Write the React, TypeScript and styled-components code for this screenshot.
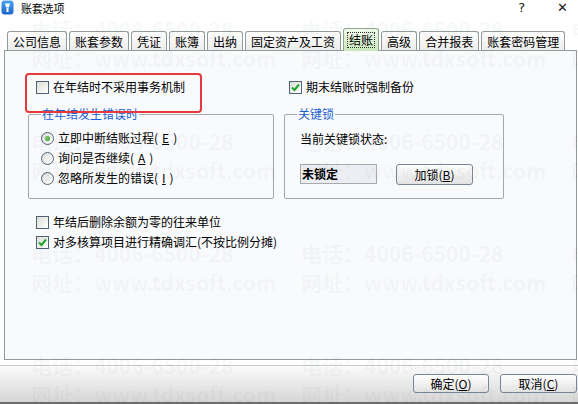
import React from 'react';
import styled, { createGlobalStyle, css } from 'styled-components';

const Global = createGlobalStyle`
  html, body { margin: 0; padding: 0; }
  body {
    width: 578px; height: 404px; overflow: hidden; background: #ffffff;
    font-family: "Noto Sans CJK SC", "Noto Sans", sans-serif;
    font-size: 12px; color: #000;
  }
`;

const Window = styled.div`
  position: relative;
  width: 578px;
  height: 404px;
  display: flex;
  flex-direction: column;
  overflow: hidden;
  background: #ffffff;
`;

const TitleBar = styled.div`
  height: 22px;
  display: flex;
  align-items: flex-start;
  padding: 0 0 0 1px;
  box-sizing: border-box;
`;

const TitleText = styled.span`
  margin-left: 7px;
  font-size: 11px;
  line-height: 16px;
  letter-spacing: -0.2px;
  color: #000;
`;

const TitleControls = styled.div`
  margin-left: auto;
  display: flex;
  gap: 32px;
  padding-right: 10px;
  font-family: "DejaVu Sans", sans-serif;
  font-size: 13px;
  line-height: 16px;
  color: #222;
`;

const TabStrip = styled.div`
  height: 28px;
  display: flex;
  align-items: flex-end;
  gap: 2px;
  padding-left: 7px;
  position: relative;
  z-index: 2;
`;

const Tab = styled.div<{ $active?: boolean }>`
  height: 19px;
  box-sizing: border-box;
  padding: 0 5px;
  border: 1px solid #919b9c;
  border-bottom: none;
  border-radius: 3px 3px 0 0;
  background: linear-gradient(#ffffff, #ececeb);
  font-size: 12px;
  line-height: 17px;
  white-space: nowrap;
  display: flex;
  align-items: center;
  ${(p) =>
    p.$active &&
    css`
      height: 23px;
      margin-bottom: -1px;
      padding: 0 4px;
      border-color: #8fa58a;
      background: linear-gradient(#f2faee, #c9e7b9);
    `}
`;

const FocusText = styled.span`
  outline: 1px dotted #333;
  padding: 0 1px;
  line-height: 14px;
`;

const Panel = styled.div`
  height: 310px;
  box-sizing: border-box;
  margin: 0 1px 0 4px;
  border: 1px solid #919b9c;
  background: #f9fafc;
  padding: 26px 0 0 23px;
  display: flex;
  flex-direction: column;
`;

const TopRow = styled.div`
  display: flex;
  gap: 10px;
`;

const Column = styled.div<{ $w: number }>`
  width: ${(p) => p.$w}px;
  display: flex;
  flex-direction: column;
`;

const CheckRow = styled.label<{ $indent?: number }>`
  position: relative;
  height: 20px;
  display: flex;
  align-items: center;
  gap: 4px;
  padding-left: ${(p) => p.$indent ?? 8}px;
  font-size: 12px;
  line-height: 16px;
  white-space: nowrap;
`;

const BoxMark = styled.span`
  width: 13px;
  height: 13px;
  box-sizing: border-box;
  border: 1px solid #4f6378;
  background: linear-gradient(135deg, #dcdcd7, #ffffff);
  display: inline-flex;
  align-items: center;
  justify-content: center;
  flex: none;
`;

const RadioMark = styled.span`
  width: 13px;
  height: 13px;
  box-sizing: border-box;
  border: 1px solid #4f6378;
  border-radius: 50%;
  background: linear-gradient(135deg, #dcdcd7, #ffffff);
  display: inline-flex;
  align-items: center;
  justify-content: center;
  flex: none;
`;

const RadioDot = styled.span`
  width: 5px;
  height: 5px;
  border-radius: 50%;
  background: radial-gradient(circle at 40% 40%, #7fd36a, #2f9a22);
`;

const Annotation = styled.span`
  position: absolute;
  left: -3px;
  top: -4px;
  width: 177px;
  height: 40px;
  box-sizing: border-box;
  border: 2px solid #e8383d;
  border-radius: 4px;
  pointer-events: none;
`;

const Group = styled.fieldset<{ $w: number; $pad: string }>`
  width: ${(p) => p.$w}px;
  box-sizing: border-box;
  margin: 10px 0 0 0;
  padding: ${(p) => p.$pad};
  border: 1px solid #a4a8ad;
  border-radius: 2px;
  min-width: 0;
`;

const Legend = styled.legend<{ $shift?: number }>`
  padding: 0 1px;
  margin-left: ${(p) => p.$shift ?? 0}px;
  font-size: 12px;
  line-height: 14px;
  color: #1a5fd1;
`;

const RadioRow = styled.label`
  height: 20px;
  display: flex;
  align-items: center;
  gap: 4px;
  font-size: 12px;
  line-height: 16px;
  white-space: nowrap;
`;

const Plain = styled.div`
  font-size: 12px;
  line-height: 16px;
  white-space: nowrap;
`;

const LockRow = styled.div`
  display: flex;
  gap: 19px;
  margin-top: 17px;
  align-items: flex-start;
`;

const StatusField = styled.div`
  width: 77px;
  height: 20px;
  box-sizing: border-box;
  border: 1px solid #a7a9ad;
  background: #eceef3;
  font-weight: 700;
  font-size: 12px;
  line-height: 18px;
  padding-left: 1px;
`;

const Button = styled.button<{ $w: number; $h?: number }>`
  width: ${(p) => p.$w}px;
  height: ${(p) => p.$h ?? 19}px;
  box-sizing: border-box;
  border: 1px solid #7a8695;
  border-radius: 3px;
  background: linear-gradient(#ffffff, #e2e2e2);
  font-family: "Noto Sans CJK SC", "Noto Sans", sans-serif;
  font-size: 12px;
  line-height: 15px;
  color: #000;
  padding: 0;
  display: flex;
  align-items: center;
  justify-content: center;
`;

const U = styled.span`
  text-decoration: underline;
`;

const BottomChecks = styled.div`
  margin-top: 13px;
  display: flex;
  flex-direction: column;
`;

const Footer = styled.div`
  margin-top: 5px;
  flex: 1;
  border-top: 1px solid #c9cbcd;
  border-bottom: 2px solid #6d6d6d;
  background: linear-gradient(#fbfbfb, #d6d6d6);
  display: flex;
  justify-content: flex-end;
  align-items: flex-start;
  gap: 11px;
  padding: 8px 1px 0 0;
`;

const Watermark = styled.div`
  position: absolute;
  inset: 0;
  pointer-events: none;
  display: grid;
  grid-template-columns: repeat(3, 270px);
  grid-auto-rows: 58px;
  row-gap: 54px;
  padding: 15px 0 0 31px;
  z-index: 5;
`;

const WaterCell = styled.div`
  font-family: "Noto Sans CJK SC", "Noto Sans", sans-serif;
  font-weight: 700;
  font-size: 21px;
  line-height: 29px;
  color: rgba(30, 40, 60, 0.042);
  white-space: nowrap;
`;

const Check = ({ on }: { on?: boolean }) => (
  <BoxMark>
    {on && (
      <svg width="11" height="11" viewBox="0 0 11 11">
        <polyline points="2,5.5 4.5,8 9,2.5" fill="none" stroke="#1fa32a" strokeWidth="2" />
      </svg>
    )}
  </BoxMark>
);

const Radio = ({ on }: { on?: boolean }) => <RadioMark>{on && <RadioDot />}</RadioMark>;

const AppIcon = () => (
  <svg width="13" height="15" viewBox="0 0 13 15">
    <defs>
      <linearGradient id="ig" x1="0" y1="0" x2="0" y2="1">
        <stop offset="0" stopColor="#4aa3f0" />
        <stop offset="1" stopColor="#1a64c8" />
      </linearGradient>
    </defs>
    <rect x="0.5" y="0.5" width="12" height="14" rx="3" fill="url(#ig)" />
    <path d="M4 3.5 h5 l-1 4 h-3 z" fill="#ffffff" />
    <rect x="5.5" y="8" width="2" height="4" fill="#ffffff" />
  </svg>
);

const tabs = ['公司信息', '账套参数', '凭证', '账簿', '出纳', '固定资产及工资', '结账', '高级', '合并报表', '账套密码管理'];

export default function App() {
  const marks = Array.from({ length: 12 });
  return (
    <Window>
      <Global />
      <TitleBar>
        <AppIcon />
        <TitleText>账套选项</TitleText>
        <TitleControls>
          <span>?</span>
          <span>✕</span>
        </TitleControls>
      </TitleBar>
      <TabStrip>
        {tabs.map((t) =>
          t === '结账' ? (
            <Tab key={t} $active>
              <FocusText>{t}</FocusText>
            </Tab>
          ) : (
            <Tab key={t}>{t}</Tab>
          )
        )}
      </TabStrip>
      <Panel>
        <TopRow>
          <Column $w={246}>
            <CheckRow>
              <Check />
              在年结时不采用事务机制
              <Annotation />
            </CheckRow>
            <Group $w={246} $pad="7px 0 10px 12px">
              <Legend>在年结发生错误时</Legend>
              <RadioRow>
                <Radio on />
                立即中断结账过程(<U>E</U>)
              </RadioRow>
              <RadioRow>
                <Radio />
                询问是否继续(<U>A</U>)
              </RadioRow>
              <RadioRow>
                <Radio />
                忽略所发生的错误(<U>I</U>)
              </RadioRow>
            </Group>
          </Column>
          <Column $w={220}>
            <CheckRow $indent={5}>
              <Check on />
              期末结账时强制备份
            </CheckRow>
            <Group $w={220} $pad="10px 0 13px 15px">
              <Legend $shift={-3}>关键锁</Legend>
              <Plain>当前关键锁状态:</Plain>
              <LockRow>
                <StatusField>未锁定</StatusField>
                <Button $w={77} $h={21}>
                  加锁(<U>B</U>)
                </Button>
              </LockRow>
            </Group>
          </Column>
        </TopRow>
        <BottomChecks>
          <CheckRow>
            <Check />
            年结后删除余额为零的往来单位
          </CheckRow>
          <CheckRow>
            <Check on />
            对多核算项目进行精确调汇(不按比例分摊)
          </CheckRow>
        </BottomChecks>
      </Panel>
      <Footer>
        <Button $w={76}>
          确定(<U>O</U>)
        </Button>
        <Button $w={77}>
          取消(<U>C</U>)
        </Button>
      </Footer>
      <Watermark>
        {marks.map((_, i) => (
          <WaterCell key={i}>
            电话：4006-6500-28
            <br />
            网址：www.tdxsoft.com
          </WaterCell>
        ))}
      </Watermark>
    </Window>
  );
}
